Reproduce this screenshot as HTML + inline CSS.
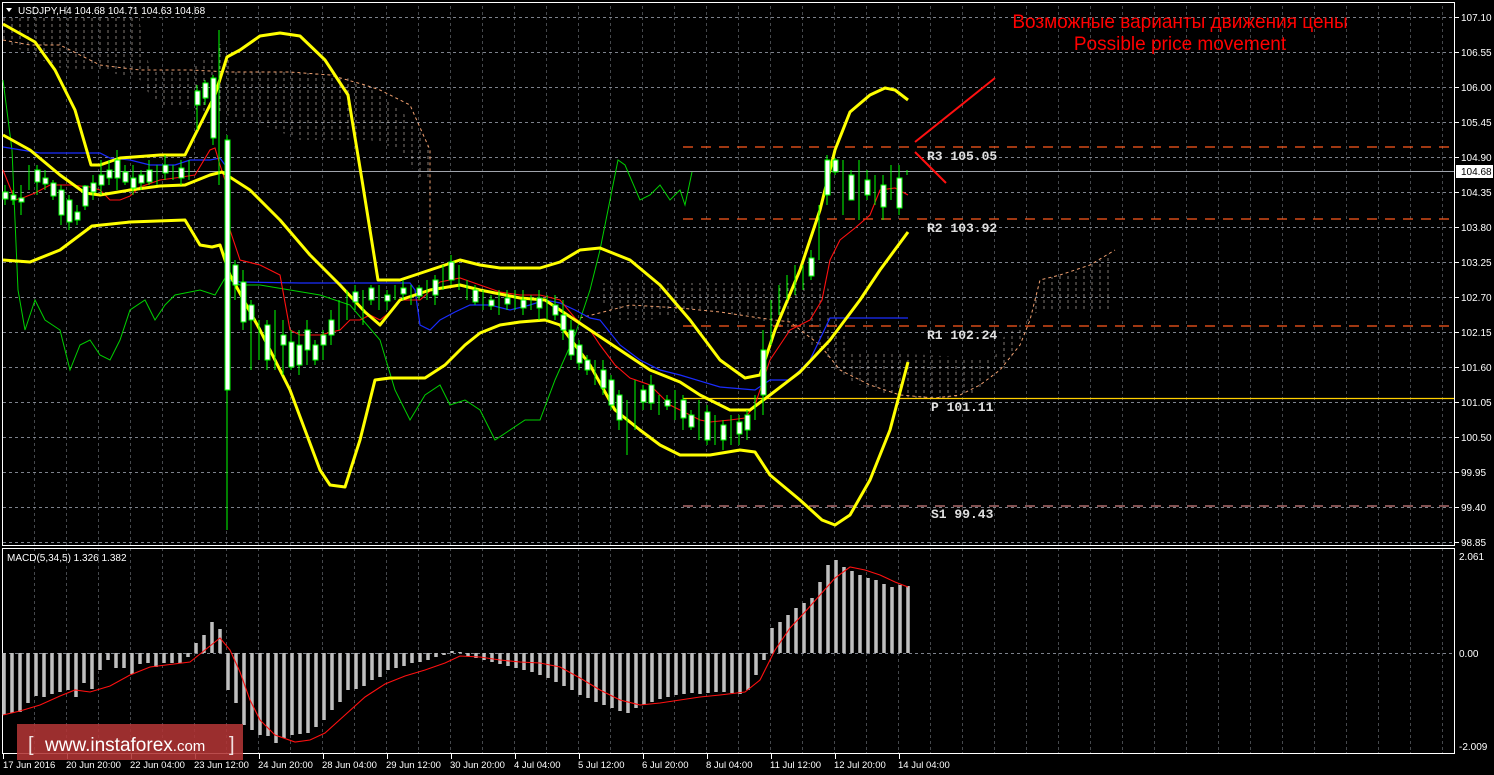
<!DOCTYPE html>
<html><head><meta charset="utf-8"><style>
html,body{margin:0;padding:0;background:#000;width:1494px;height:775px;overflow:hidden}
svg{display:block}
text{font-family:"Liberation Sans",sans-serif}
text.m{font-family:"Liberation Mono",monospace}
</style></head><body>
<svg width="1494" height="775" viewBox="0 0 1494 775" xmlns="http://www.w3.org/2000/svg">
<defs>
<pattern id="vg" width="32" height="35" patternUnits="userSpaceOnUse" x="3" y="17">
<line x1="32" y1="0" x2="32" y2="35" stroke="#8a8f99" stroke-width="1" stroke-dasharray="3,3"/>
</pattern>
<pattern id="cl" width="8" height="6" patternUnits="userSpaceOnUse">
<line x1="4" y1="0" x2="4" y2="3" stroke="#e8d8d0" stroke-width="1"/>
</pattern>
</defs>
<rect width="1494" height="775" fill="#000"/>
<rect x="2.5" y="2.5" width="1452" height="543" fill="none" stroke="#fff"/>
<rect x="2.5" y="548.5" width="1452" height="205" fill="none" stroke="#fff"/>
<g stroke="#7d828c" stroke-dasharray="3,3" stroke-width="1">
<path d="M3 17.5H1454M3 52.5H1454M3 87.5H1454M3 122.5H1454M3 157.5H1454M3 192.5H1454M3 227.5H1454M3 262.5H1454M3 297.5H1454M3 332.5H1454M3 367.5H1454M3 402.5H1454M3 437.5H1454M3 472.5H1454M3 507.5H1454M3 542.5H1454"/>
<path d="M3 653.5H1454"/>
</g>
<rect x="3" y="3" width="1451" height="542" fill="url(#vg)"/>
<rect x="3" y="549" width="1451" height="204" fill="url(#vg)"/>
<g>
<polygon points="3,15 140,15 140,25 150,70 190,70 225,40 230,70 290,72 340,75 365,85 400,110 420,130 430,150 430,180 420,180 400,150 370,140 330,140 300,140 250,120 200,110 160,105 150,95 140,80 100,70 60,68 30,55 3,40" fill="url(#cl)" opacity="0.55"/>
<polyline points="3,40 30,45 60,45 100,65 140,70 190,70 230,72 290,72 330,75 365,85 380,90 410,105 430,150 430,260" fill="none" stroke="#f0a070" stroke-dasharray="3,3"/>
<polygon points="600,283 820,283 830,290 850,352 930,355 990,360 1000,360 1005,370 1030,320 1040,280 1075,272 1100,260 1115,250 1115,310 1085,310 1040,310 1000,340 990,375 975,395 930,400 890,395 860,385 840,375 820,350 800,340 780,330 760,320 720,312 680,312 650,320 620,320 600,300" fill="url(#cl)" opacity="0.55"/>
<polyline points="580,318 630,305 680,308 720,312 760,318 790,322 820,345 840,370 870,385 900,395 935,398 960,395 980,385 1000,370 1020,345 1030,320 1040,280 1060,275 1090,265 1115,250" fill="none" stroke="#f0a070" stroke-dasharray="3,3"/>
</g>
<g stroke-width="1.3" stroke-dasharray="10,8">
<line x1="683" y1="147" x2="1454" y2="147" stroke="#ff5a1e"/>
<line x1="683" y1="219" x2="1454" y2="219" stroke="#ff5a1e"/>
<line x1="683" y1="326" x2="1454" y2="326" stroke="#ff5a1e"/>
<line x1="683" y1="506" x2="1454" y2="506" stroke="#d08080"/>
</g>
<line x1="683" y1="398.5" x2="1454" y2="398.5" stroke="#ffd000" stroke-width="1.3"/>
<line x1="3" y1="171.5" x2="1454" y2="171.5" stroke="#a0a4ac" stroke-width="1"/>
<g font-size="13" fill="#e0e0e0" font-weight="bold">
<text class="m" x="927" y="160">R3 105.05</text>
<text class="m" x="927" y="232">R2 103.92</text>
<text class="m" x="927" y="339">R1 102.24</text>
<text class="m" x="931" y="411">P 101.11</text>
<text class="m" x="931" y="518">S1 99.43</text>
</g>
<polyline points="3,80 12,150 18,290 25,330 35,300 45,320 60,330 70,370 80,345 90,340 100,355 110,360 120,340 130,310 145,300 155,320 165,305 175,295 190,292 200,290 215,295 225,278 240,285 260,285 290,290 320,295 350,305 380,340 395,390 410,420 425,395 440,385 450,405 465,400 480,410 495,440 510,430 525,420 540,420 555,380 575,335 590,290 600,250 610,200 618,160 625,165 640,200 650,195 660,185 670,200 680,190 685,205 692,172" fill="none" stroke="#00d000" stroke-width="1"/>
<polyline points="3,147 40,153 100,153 110,158 130,160 150,165 175,165 190,160 210,160 220,158 225,165 228,280 240,282 300,283 410,283 415,290 420,325 430,330 440,320 455,312 470,305 490,305 510,310 530,305 545,300 560,303 575,310 590,318 600,320 620,345 640,360 660,370 680,375 720,387 755,390 770,380 790,380 810,360 830,318 908,318" fill="none" stroke="#1a2cff" stroke-width="1.2"/>
<polyline points="3,170 15,200 25,197 35,193 50,185 70,185 90,187 100,190 110,200 120,200 130,196 140,187 160,180 175,178 195,175 210,150 215,148 220,165 225,180 230,230 240,260 260,265 280,275 290,330 300,335 320,335 340,330 350,320 360,320 370,315 380,320 390,312 400,300 420,300 440,282 460,278 480,285 500,292 520,295 540,295 560,300 575,318 590,330 600,345 615,365 630,378 650,385 670,405 690,415 700,420 710,422 730,420 745,418 755,405 770,360 790,330 810,320 822,300 830,260 840,240 855,228 870,215 880,190 895,188 908,195" fill="none" stroke="#ff1010" stroke-width="1.1"/>
<g fill="none" stroke="#ffff00" stroke-width="3" stroke-linejoin="round">
<polyline points="3,24 35,42 55,70 75,110 91,165 100,165 120,158 160,155 185,155 200,125 215,95 227,57 240,50 260,36 280,33 300,36 325,60 348,95 362,180 378,280 400,280 430,270 460,260 480,265 500,268 540,268 560,262 580,250 600,248 630,260 660,285 690,320 720,360 745,378 760,375 775,330 800,270 820,210 835,150 850,112 870,95 885,88 895,90 908,100"/>
<polyline points="3,135 30,150 60,175 85,193 100,195 130,190 160,186 185,185 210,175 222,172 250,190 280,220 310,255 340,285 365,312 380,325 400,300 430,290 460,285 480,290 520,298 545,300 560,310 590,330 620,350 650,370 680,382 700,395 730,410 750,410 770,395 800,372 830,340 860,300 880,270 908,232"/>
<polyline points="3,260 30,262 60,250 92,226 130,222 185,220 200,245 212,247 220,245 230,275 260,330 290,390 320,470 330,485 345,487 360,440 375,380 390,378 425,378 445,365 465,345 480,333 500,325 520,322 545,320 560,325 590,365 615,410 640,430 660,445 680,455 710,455 740,450 755,452 770,475 800,500 822,520 835,525 850,515 870,480 890,430 908,362"/>
</g>
<g stroke="#00ff00" stroke-width="1">
<path d="M5 185V205M13 190V205M21 185V215M29 165V190M37 165V195M45 170V190M53 180V200M61 185V225M69 195V230M77 205V225M85 185V210M93 175V200M101 160V195M109 160V185M117 150V190M125 165V185M133 165V195M141 170V190M149 160V185M157 165V185M165 155V180M173 165V180M181 160V185M189 160V180M197 85V130M205 80V105M213 75V145M219 30V185M227 135V530M235 260V300M243 270V330M251 300V370M259 320V360M267 320V370M275 310V370M283 320V375M291 330V370M299 330V375M307 320V365M315 340V365M323 330V360M331 310V345M339 300V330M347 290V320M355 285V310M363 290V325M371 285V305M379 285V310M387 290V310M395 285V300M403 280V300M411 285V305M419 285V300M427 280V300M435 275V305M443 265V290M451 255V285M459 265V290M467 280V300M475 285V305M483 290V310M491 295V310M499 290V315M507 290V310M515 290V310M523 290V315M531 295V310M539 290V320M547 295V320M555 295V320M563 300V340M571 320V360M579 340V370M587 355V375M595 360V385M603 360V395M611 375V410M619 390V430M627 400V455M635 380V430M643 385V410M651 375V410M659 395V415M667 395V410M675 390V420M683 395V430M691 410V430M699 400V440M707 405V445M715 415V445M723 420V450M731 415V445M739 415V445M747 410V440M755 395V420M763 330V415M771 300V345M779 285V315M787 275V300M795 265V295M803 265V290M811 250V280M819 205V260M827 155V205M835 158V175M843 160V215M851 170V200M859 160V220M867 170V200M875 175V205M883 175V220M891 165V200M899 165V215M907 170V175"/>
</g>
<g fill="#fff" stroke="#00ff00" stroke-width="1">
<rect x="3" y="192" width="5" height="7"/><rect x="11" y="195" width="5" height="5"/><rect x="19" y="198" width="5" height="4"/><rect x="35" y="170" width="5" height="12"/><rect x="43" y="178" width="5" height="6"/><rect x="51" y="183" width="5" height="13"/><rect x="59" y="190" width="5" height="25"/><rect x="67" y="200" width="5" height="22"/><rect x="75" y="212" width="5" height="8"/><rect x="83" y="186" width="5" height="20"/><rect x="91" y="183" width="5" height="9"/><rect x="99" y="175" width="5" height="10"/><rect x="107" y="170" width="5" height="8"/><rect x="115" y="160" width="5" height="18"/><rect x="123" y="172" width="5" height="10"/><rect x="131" y="178" width="5" height="10"/><rect x="139" y="175" width="5" height="8"/><rect x="147" y="170" width="5" height="12"/><rect x="163" y="165" width="5" height="8"/><rect x="179" y="168" width="5" height="10"/><rect x="195" y="91" width="5" height="14"/><rect x="203" y="83" width="5" height="15"/><rect x="211" y="78" width="5" height="60"/><rect x="225" y="140" width="5" height="250"/><rect x="233" y="265" width="5" height="20"/><rect x="241" y="282" width="5" height="40"/><rect x="249" y="305" width="5" height="15"/><rect x="265" y="325" width="5" height="35"/><rect x="281" y="335" width="5" height="10"/><rect x="289" y="342" width="5" height="25"/><rect x="297" y="345" width="5" height="20"/><rect x="305" y="330" width="5" height="20"/><rect x="313" y="345" width="5" height="15"/><rect x="321" y="335" width="5" height="10"/><rect x="329" y="320" width="5" height="15"/><rect x="353" y="292" width="5" height="10"/><rect x="369" y="288" width="5" height="12"/><rect x="385" y="295" width="5" height="6"/><rect x="401" y="288" width="5" height="6"/><rect x="417" y="288" width="5" height="8"/><rect x="433" y="280" width="5" height="15"/><rect x="449" y="262" width="5" height="18"/><rect x="473" y="290" width="5" height="12"/><rect x="489" y="300" width="5" height="6"/><rect x="505" y="298" width="5" height="6"/><rect x="521" y="300" width="5" height="8"/><rect x="537" y="298" width="5" height="10"/><rect x="553" y="305" width="5" height="10"/><rect x="561" y="315" width="5" height="15"/><rect x="569" y="330" width="5" height="25"/><rect x="577" y="345" width="5" height="18"/><rect x="585" y="360" width="5" height="10"/><rect x="601" y="370" width="5" height="18"/><rect x="609" y="380" width="5" height="25"/><rect x="617" y="395" width="5" height="25"/><rect x="641" y="390" width="5" height="12"/><rect x="649" y="385" width="5" height="18"/><rect x="665" y="400" width="5" height="6"/><rect x="681" y="400" width="5" height="18"/><rect x="689" y="415" width="5" height="12"/><rect x="705" y="412" width="5" height="28"/><rect x="721" y="425" width="5" height="15"/><rect x="737" y="422" width="5" height="12"/><rect x="745" y="415" width="5" height="15"/><rect x="761" y="350" width="5" height="45"/><rect x="809" y="258" width="5" height="18"/><rect x="825" y="160" width="5" height="35"/><rect x="833" y="160" width="5" height="12"/><rect x="849" y="175" width="5" height="25"/><rect x="865" y="180" width="5" height="15"/><rect x="881" y="185" width="5" height="22"/><rect x="897" y="178" width="5" height="30"/>
</g>
<g stroke="#ff1010" stroke-width="2">
<line x1="915" y1="142" x2="995" y2="78"/>
<line x1="915" y1="152" x2="946" y2="183"/>
</g>
<text x="1180" y="28" text-anchor="middle" font-size="19" fill="#ff0000">Возможные варианты движения цены</text>
<text x="1180" y="50" text-anchor="middle" font-size="19" fill="#ff0000">Possible price movement</text>
<path d="M6 8L12 8L9 12Z" fill="#fff"/>
<text x="18" y="14" font-size="10" fill="#fff">USDJPY,H4  104.68 104.71 104.63 104.68</text>
<g font-size="10" fill="#fff">
<g stroke="#fff"><path d="M1455 17.5h4M1455 52.5h4M1455 87.5h4M1455 122.5h4M1455 157.5h4M1455 192.5h4M1455 227.5h4M1455 262.5h4M1455 297.5h4M1455 332.5h4M1455 367.5h4M1455 402.5h4M1455 437.5h4M1455 472.5h4M1455 507.5h4M1455 542.5h4"/></g>
<text x="1461" y="21">107.10</text><text x="1461" y="56">106.55</text><text x="1461" y="91">106.00</text><text x="1461" y="126">105.45</text><text x="1461" y="161">104.90</text><text x="1461" y="196">104.35</text><text x="1461" y="231">103.80</text><text x="1461" y="266">103.25</text><text x="1461" y="301">102.70</text><text x="1461" y="336">102.15</text><text x="1461" y="371">101.60</text><text x="1461" y="406">101.05</text><text x="1461" y="441">100.50</text><text x="1461" y="476">99.95</text><text x="1461" y="511">99.40</text><text x="1461" y="546">98.85</text>
<rect x="1456" y="165" width="37" height="13" fill="#fff"/>
<text x="1461" y="175" fill="#000">104.68</text>
<text x="1459" y="560">2.061</text><text x="1459" y="657">0.00</text><text x="1459" y="750">-2.009</text>
</g>
<text x="7" y="561" font-size="10" fill="#fff">MACD(5,34,5) 1.326 1.382</text>
<g stroke="#c0c0c0" stroke-width="3.5">
<path d="M4 653V715M12 653V713M20 653V712M28 653V703M36 653V696M44 653V697M52 653V694M60 653V692M68 653V690M76 653V697M84 653V683M92 653V689M100 653V670M108 653V660M116 653V668M124 653V668M132 653V674M140 653V664M148 653V663M156 653V667M164 653V663M172 653V663M180 653V663M188 653V657M196 653V643M204 653V635M212 653V622M220 653V629M228 653V690M236 653V703M244 653V725M252 653V730M260 653V735M268 653V736M276 653V743M284 653V738M292 653V735M300 653V734M308 653V733M316 653V727M324 653V720M332 653V710M340 653V702M348 653V690M356 653V689M364 653V686M372 653V680M380 653V677M388 653V670M396 653V668M404 653V666M412 653V663M420 653V662M428 653V660M436 653V657M444 653V655M452 653V651M460 653V652M468 653V656M476 653V658M484 653V660M492 653V662M500 653V664M508 653V666M516 653V668M524 653V670M532 653V672M540 653V675M548 653V678M556 653V682M564 653V686M572 653V690M580 653V695M588 653V698M596 653V702M604 653V705M612 653V708M620 653V711M628 653V713M636 653V708M644 653V705M652 653V702M660 653V699M668 653V697M676 653V695M684 653V694M692 653V693M700 653V694M708 653V693M716 653V692M724 653V692M732 653V693M740 653V694M748 653V690M756 653V675M764 653V660M772 653V628M780 653V622M788 653V615M796 653V608M804 653V603M812 653V598M820 653V582M828 653V565M836 653V560M844 653V567M852 653V571M860 653V575M868 653V578M876 653V580M884 653V584M892 653V587M900 653V585M908 653V586"/>
</g>
<polyline points="3,715 20,711 40,705 60,696 75,690 90,692 110,686 130,675 150,667 190,662 205,650 220,638 230,650 240,672 250,700 260,720 275,735 295,742 310,740 325,733 345,715 365,697 385,684 405,676 425,670 445,663 460,656 480,657 500,660 520,662 540,663 560,667 580,678 600,690 620,700 640,705 660,703 680,700 700,697 720,695 745,692 760,680 775,650 790,628 805,612 820,595 835,578 850,567 865,570 880,575 895,582 908,587" fill="none" stroke="#ff1010" stroke-width="1.1"/>
<g stroke="#fff"><path d="M3.5 754v5M67.5 754v5M131.5 754v5M195.5 754v5M259.5 754v5M323.5 754v5M387.5 754v5M451.5 754v5M515.5 754v5M579.5 754v5M643.5 754v5M707.5 754v5M771.5 754v5M835.5 754v5M899.5 754v5"/></g>
<g font-size="9.5" fill="#fff">
<text x="3" y="768">17 Jun 2016</text><text x="66" y="768">20 Jun 20:00</text><text x="130" y="768">22 Jun 04:00</text><text x="194" y="768">23 Jun 12:00</text><text x="258" y="768">24 Jun 20:00</text><text x="322" y="768">28 Jun 04:00</text><text x="386" y="768">29 Jun 12:00</text><text x="450" y="768">30 Jun 20:00</text><text x="514" y="768">4 Jul 04:00</text><text x="578" y="768">5 Jul 12:00</text><text x="642" y="768">6 Jul 20:00</text><text x="706" y="768">8 Jul 04:00</text><text x="770" y="768">11 Jul 12:00</text><text x="834" y="768">12 Jul 20:00</text><text x="898" y="768">14 Jul 04:00</text>
</g>
<rect x="17" y="724" width="226" height="36" fill="#b03434" fill-opacity="0.88"/>
<text x="28" y="751" font-size="20" fill="#f0e0e0">[</text>
<text x="45" y="751" font-size="19" fill="#fff">www.instaforex<tspan font-size="15">.com</tspan></text>
<text x="229" y="751" font-size="20" fill="#f0e0e0">]</text>
</svg>
</body></html>
